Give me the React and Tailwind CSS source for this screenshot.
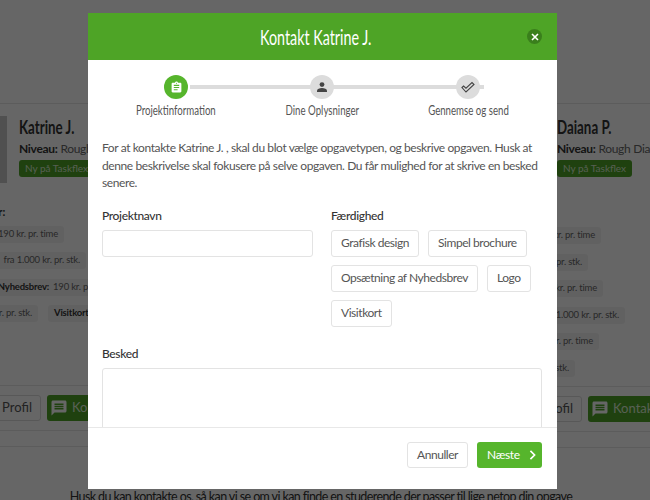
import React from "react";
import { MdAssignment, MdMessage } from "react-icons/md";

// ingen Oswald/Source Sans her, så overskrifter presses med scale-x og brødtekst med tracking
const body = "text-[12px] tracking-[-0.35px]";
const tag = "text-[12px] tracking-[-0.45px]";

function Chip({ label, value, className = "" }) {
  return (
    <div className={`flex h-[17px] shrink-0 items-center gap-1 rounded-[3px] bg-[#f3f3f3] px-[6px] text-[9.5px] tracking-[-0.2px] whitespace-nowrap text-[#666] ${className}`}>
      {label && <b className="font-bold text-[#333]">{label}</b>}
      {value}
    </div>
  );
}

function CardHead({ name }) {
  return (
    <div className="flex items-start gap-3">
      <div className="h-[67px] w-[60px] shrink-0 bg-[#c9c9c9]" />
      <div className="whitespace-nowrap">
        <div className="w-fit origin-left scale-x-[.74] text-[18px] leading-[22px] font-bold text-[#333]">{name}</div>
        <div className="mt-[3px] text-[12px] leading-[16px] tracking-[-0.3px] text-[#666]">
          <b className="font-bold text-[#333]">Niveau:</b> Rough Diamond
        </div>
        <div className="mt-[3px] w-fit rounded-[3px] bg-[#4ea426] px-[6px] text-[10px] leading-[17px] text-[#d9eccf]">Ny på Taskflex</div>
      </div>
    </div>
  );
}

function CardActions({ offset }) {
  return (
    <>
      <div className={`mt-[10px] flex h-[46px] items-center gap-[6px] border-y border-[#e5e5e5] ${offset}`}>
        <div className="flex h-[26px] w-[80px] shrink-0 items-center justify-end gap-1 rounded-[3px] border border-[#ddd] px-2 text-[13px] text-[#555]">
          <span className="h-[7px] w-[7px] rounded-full bg-[#444]" />
          Profil
        </div>
        <div className="flex h-[26px] w-[90px] shrink-0 items-center gap-1 rounded-[3px] bg-[#4ea426] pl-[3px] text-[13px] text-[#dcefd2]">
          <MdMessage className="shrink-0 text-[18px] text-white" />
          Kontakt
        </div>
      </div>
      <div className="mt-[15px] border-t border-[#e5e5e5]" />
    </>
  );
}

function Background() {
  return (
    <div className="h-[500px] w-[650px] overflow-hidden bg-white font-['Lato',sans-serif]">
      <div className="-ml-[53px] flex w-[1200px] gap-[38px] pt-[103px]">
        {/* venstre kort */}
        <div className="w-[500px] border-t border-[#e5e5e5] pt-[12px]">
          <CardHead name="Katrine J." />
          <div className="mt-[21px] pl-[27px] text-[11px] font-bold text-[#333]">Priser:</div>
          <div className="mt-[5px] flex h-[149px] flex-col gap-[9.5px]">
            <div className="flex w-[117px] justify-end"><Chip label="Grafisk design:" value="190 kr. pr. time" /></div>
            <div className="flex w-[139px] justify-end"><Chip label="Simpel brochure:" value="fra 1.000 kr. pr. stk." /></div>
            <div className="flex w-[172px] justify-end"><Chip label="Opsætning af Nyhedsbrev:" value="190 kr. pr. time" /></div>
            <div className="flex gap-[10px]">
              <div className="flex w-[91px] justify-end"><Chip label="Logo:" value="500 kr. pr. stk." /></div>
              <Chip label="Visitkort:" value="100 kr. pr. stk." />
            </div>
          </div>
          <CardActions offset="pl-[14px]" />
        </div>
        {/* højre kort */}
        <div className="w-[500px] border-t border-[#e5e5e5] pt-[12px]">
          <CardHead name="Daiana P." />
          <div className="mt-[44px] flex h-[149px] flex-col gap-[9.5px]">
            <div className="flex w-[116px] justify-end"><Chip label="Grafisk design:" value="190 kr. pr. time" /></div>
            <div className="flex w-[103px] justify-end"><Chip label="Logo:" value="500 kr. pr. stk." /></div>
            <div className="flex w-[118px] justify-end"><Chip label="Nyhedsbrev:" value="190 kr. pr. time" /></div>
            <div className="flex w-[140px] justify-end"><Chip label="Simpel brochure:" value="fra 1.000 kr. pr. stk." /></div>
            <div className="flex w-[114px] justify-end"><Chip label="Opsætning:" value="190 kr. pr. time" /></div>
            <div className="flex w-[90px] justify-end"><Chip label="Visitkort:" value="100 kr. pr. stk." /></div>
          </div>
          <CardActions offset="pl-[17px]" />
        </div>
      </div>
      <p className="mt-[40px] pr-[8px] text-center text-[12.5px] tracking-[-0.6px] whitespace-nowrap text-[#333]">
        Husk du kan kontakte os, så kan vi se om vi kan finde en studerende der passer til lige netop din opgave
      </p>
    </div>
  );
}

function Step({ icon, label, active }) {
  return (
    <div className="relative z-10 flex w-[146px] flex-col items-center">
      <div className={`flex h-6 w-6 items-center justify-center rounded-full ${active ? "bg-[#56b52c] text-white" : "bg-[#dcdcdc] text-[#444]"}`}>
        {icon}
      </div>
      <div className="mt-[2px] scale-x-[.69] text-[14px] leading-[18px] whitespace-nowrap text-[#555]">{label}</div>
    </div>
  );
}

function Tag({ children }) {
  return (
    <div className={`flex h-[27px] items-center rounded-[3px] border border-[#e3e3e3] px-[9px] whitespace-nowrap text-[#555] ${tag}`}>
      {children}
    </div>
  );
}

function Modal() {
  return (
    <div className="absolute inset-0 bg-black/60">
      <div className="mx-[88px] mt-[13px] flex h-[476px] w-[469px] flex-col overflow-hidden bg-white font-['Lato',sans-serif]">
        <div className="relative flex h-[47px] shrink-0 items-center justify-center bg-[#4ea426] pr-[14px]">
          <h1 className="scale-x-[.65] text-[22px] whitespace-nowrap text-white">Kontakt Katrine J.</h1>
          <div className="absolute top-[16px] right-[15px] flex h-[15px] w-[15px] items-center justify-center rounded-full bg-[#3a7f1c]">
            <svg viewBox="0 0 8 8" className="h-2 w-2" fill="none" stroke="white" strokeWidth="1.6">
              <path d="M1 1l6 6M7 1L1 7" />
            </svg>
          </div>
        </div>

        <div className="min-h-0 flex-1 overflow-hidden pr-[15px] pl-[14px]">
          <div className="relative mt-[15px] flex justify-center">
            <div className="absolute top-[10px] left-[88px] h-1 w-[294px] bg-[#dcdcdc]" />
            <Step active label="Projektinformation" icon={<MdAssignment className="text-[13px]" />} />
            <Step
              label="Dine Oplysninger"
              icon={
                <svg viewBox="0 0 12 12" className="h-3 w-3" fill="currentColor">
                  <circle cx="6" cy="3.6" r="2.4" />
                  <path d="M1 11v-1.2C1 7.9 3.6 7 6 7s5 .9 5 2.8V11z" />
                </svg>
              }
            />
            <Step
              label="Gennemse og send"
              icon={
                <svg viewBox="0 0 14 12" className="h-[12px] w-[14px]" fill="none" stroke="currentColor" strokeWidth="1.1">
                  <path d="M1 6.5L2.6 5 5 7.2 11 1.5l2 2L5 11z" />
                </svg>
              }
            />
          </div>

          <p className="mt-[20px] text-[12px] leading-[17.5px] tracking-[-0.4px] text-[#555]">
            For at kontakte Katrine J. , skal du blot vælge opgavetypen, og beskrive opgaven. Husk at denne beskrivelse skal fokusere på selve opgaven. Du får mulighed for at skrive en besked senere.
          </p>

          <div className="mt-[15px] flex gap-[18px]">
            <div className="w-[211px] shrink-0">
              <div className={`leading-[18px] font-medium text-[#333] ${body}`}>Projektnavn</div>
              <div className="mt-[5px] h-[27px] rounded-[3px] border border-[#e3e3e3]" />
            </div>
            <div className="flex-1">
              <div className={`leading-[18px] font-medium text-[#333] ${body}`}>Færdighed</div>
              <div className="mt-[5px] flex w-[205px] flex-wrap gap-x-[9px] gap-y-2">
                <Tag>Grafisk design</Tag>
                <Tag>Simpel brochure</Tag>
                <Tag>Opsætning af Nyhedsbrev</Tag>
                <Tag>Logo</Tag>
                <Tag>Visitkort</Tag>
              </div>
            </div>
          </div>

          <div className={`mt-[18px] leading-[18px] font-medium text-[#333] ${body}`}>Besked</div>
          <div className="mt-[5px] h-[100px] rounded-[3px] border border-[#e3e3e3]" />
        </div>

        <div className="flex h-[62px] shrink-0 items-start justify-end gap-[9px] border-t border-[#e8e8e8] px-[15px] pt-[14px]">
          <div className={`flex h-[26px] items-center rounded-[3px] border border-[#e3e3e3] px-[9px] text-[#555] ${tag}`}>Annuller</div>
          <div className={`flex h-[26px] w-[65px] items-center justify-between rounded-[3px] bg-[#56b52c] pr-[6px] pl-[10px] text-white ${body}`}>
            Næste
            <svg viewBox="0 0 8 12" className="h-[10px] w-[7px]" fill="none" stroke="white" strokeWidth="2">
              <path d="M1.5 1l5 5-5 5" />
            </svg>
          </div>
        </div>
      </div>
    </div>
  );
}

export default function App() {
  return (
    <div className="relative h-[500px] w-[650px] overflow-hidden">
      <Background />
      <Modal />
    </div>
  );
}
